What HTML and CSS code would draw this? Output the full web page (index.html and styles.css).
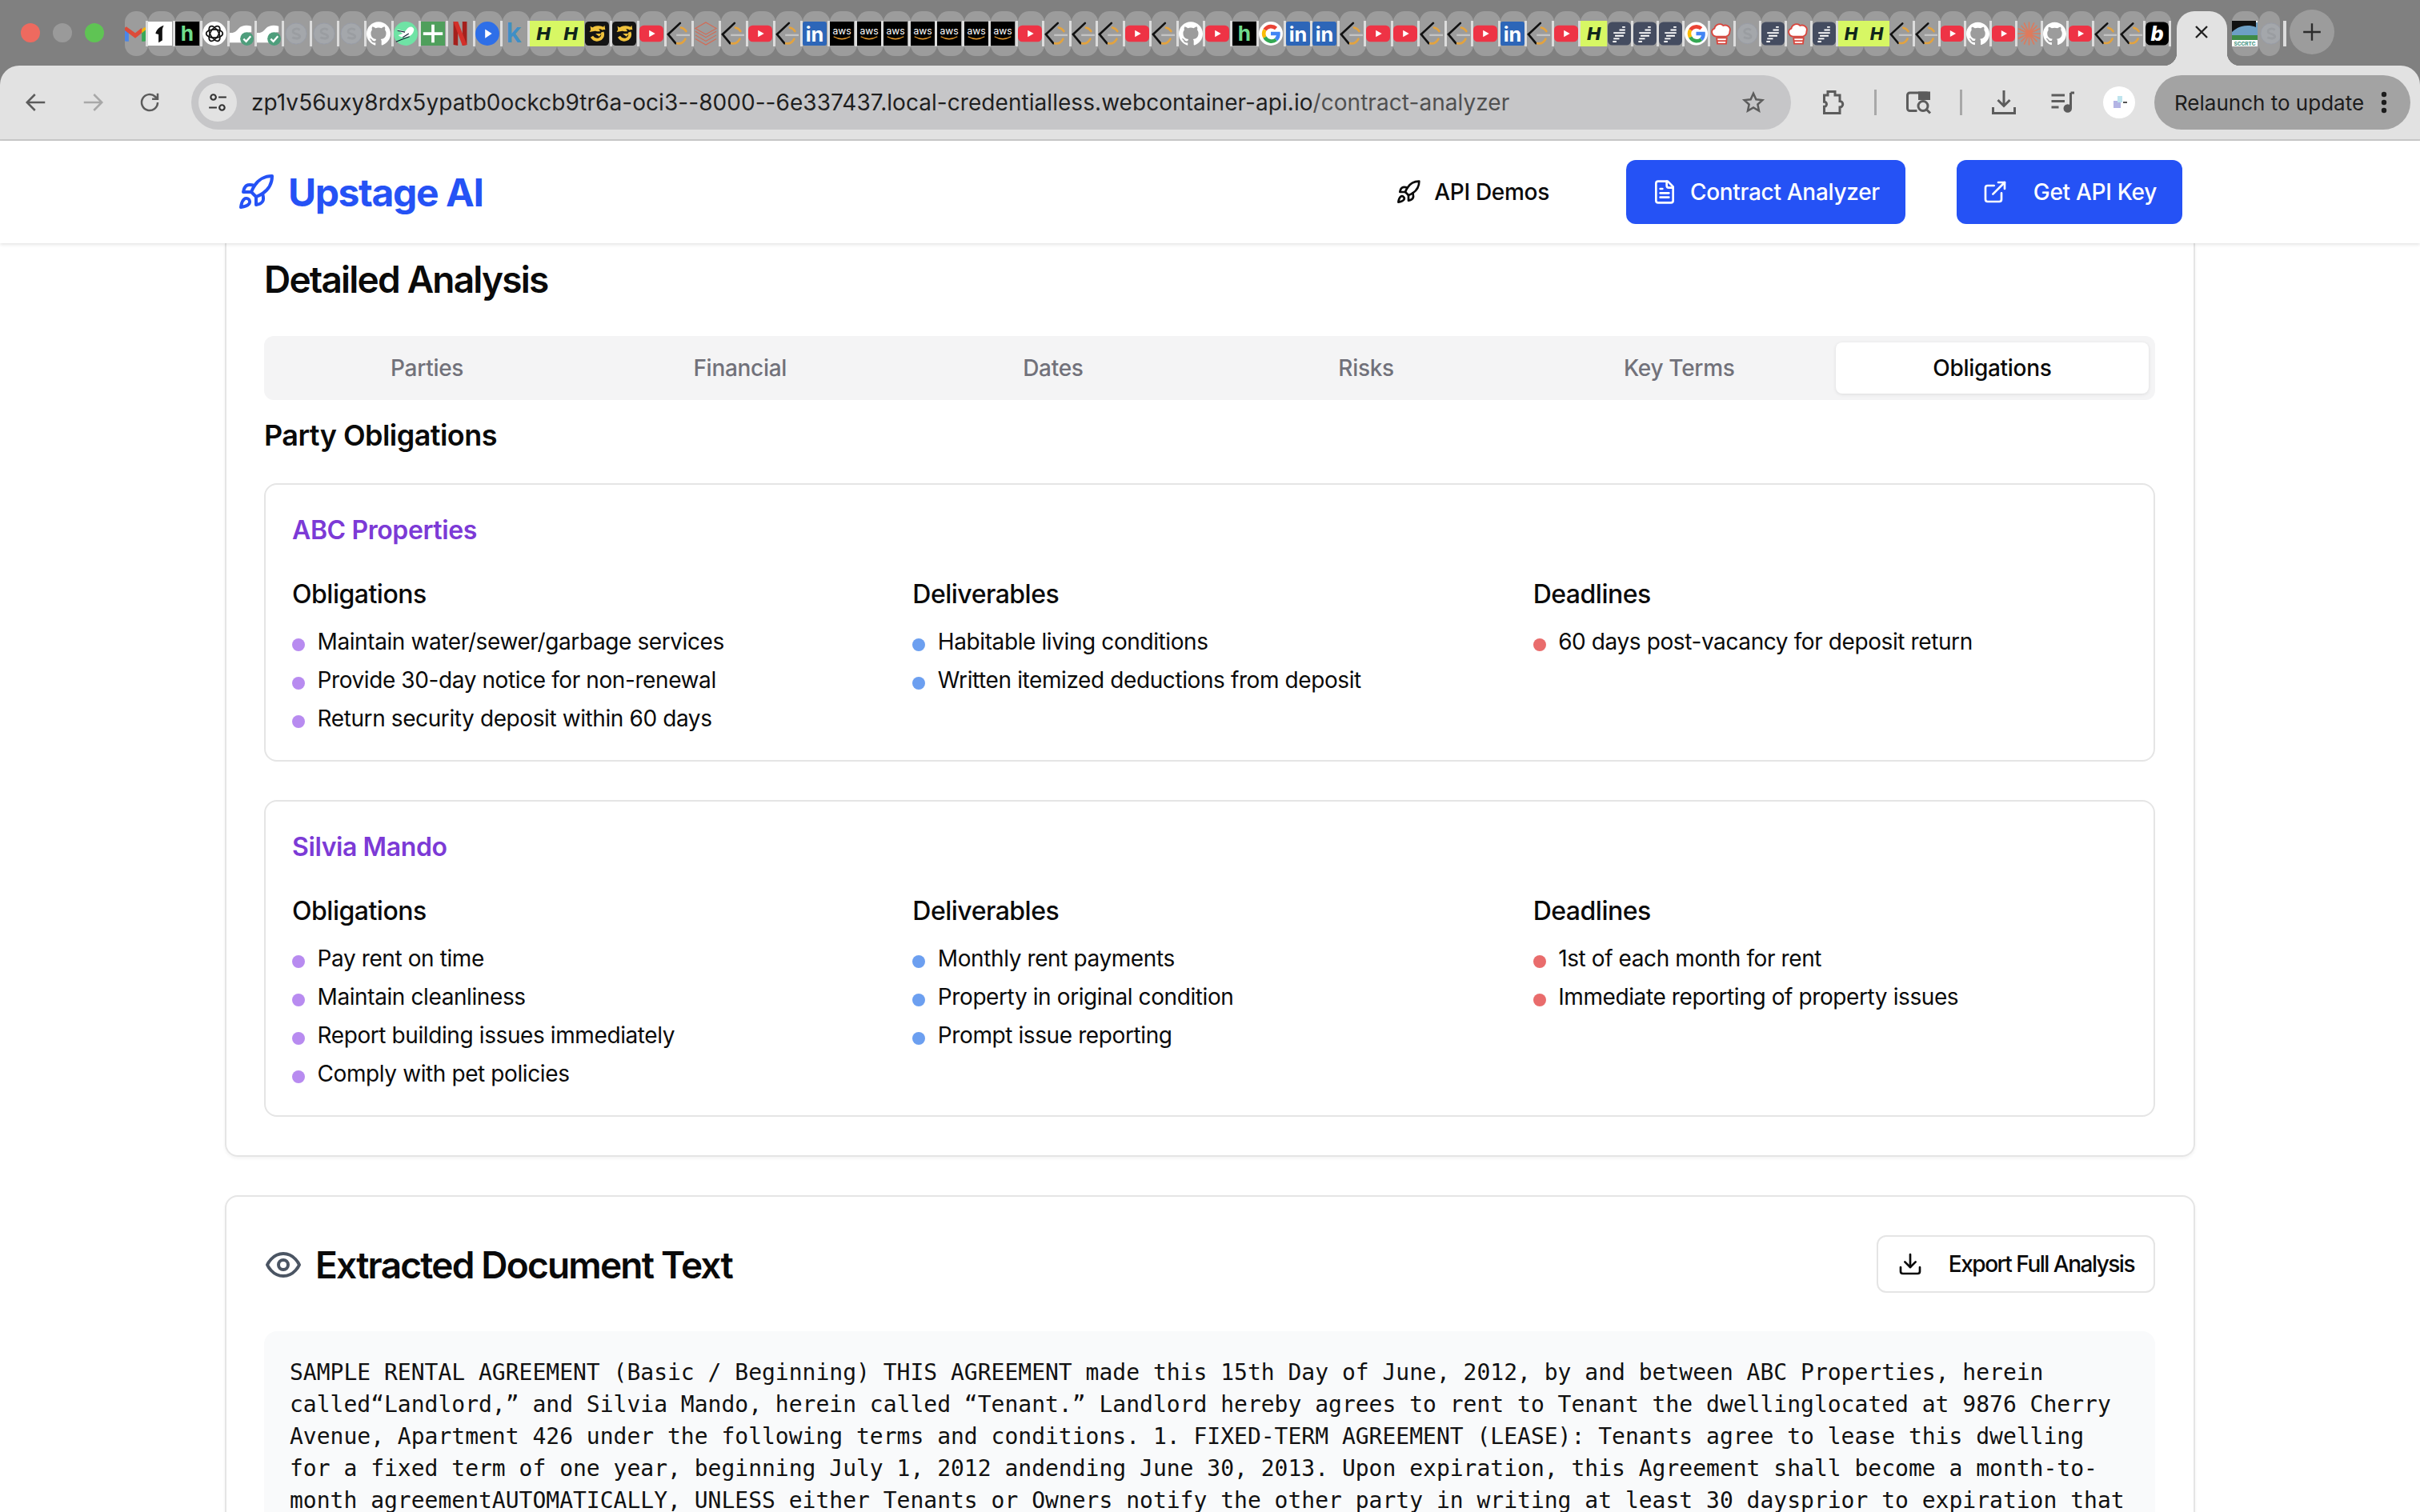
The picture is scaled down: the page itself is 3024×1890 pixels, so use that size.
FILE: index.html
```html
<!DOCTYPE html>
<html lang="en">
<head>
    <meta charset="UTF-8">
    <meta name="viewport" content="width=device-width, initial-scale=1.0">
    <title>Upstage AI - Contract Analyzer</title>
    <link rel="stylesheet" href="styles.css">
</head>
<body>
    <svg class="sprites" aria-hidden="true">
        <symbol id="gmail" viewBox="0 0 32 32">
            <path fill="#4a86e8" d="M0 10h6v18H2a2 2 0 0 1-2-2z"/>
            <path fill="#3aa757" d="M26 15l6-5v16a2 2 0 0 1-2 2h-4z"/>
            <path fill="#f4b400" d="M26 10l3-3c1-.8 3-.5 3 1v2l-6 5z"/>
            <path fill="#dd4b39" d="M0 8c0-2 2-3 3.500-2L16 15 26 7v8l-10 8L0 11z"/>
        </symbol>
        <symbol id="fig" viewBox="0 0 32 32">
            <rect width="32" height="32" fill="#fff"/>
            <path fill="#111" d="M21 5c-6 2-10 6-11 11l4 1v11l5-3V12c0-3 1-5 2-7z"/>
        </symbol>
        <symbol id="hh" viewBox="0 0 32 32">
            <rect width="32" height="32" fill="#000"/>
            <text class="fav-text" x="16" y="26" font-size="28" font-weight="700" fill="#6fdc8c" text-anchor="middle">h</text>
        </symbol>
        <symbol id="openai" viewBox="0 0 32 32">
            <circle cx="16" cy="16" r="16" fill="#fff"/>
            <g fill="none" stroke="#111" stroke-width="1.800">
                <ellipse cx="16" cy="16" rx="11" ry="5.500"/>
                <ellipse cx="16" cy="16" rx="11" ry="5.500" transform="rotate(60 16 16)"/>
                <ellipse cx="16" cy="16" rx="11" ry="5.500" transform="rotate(120 16 16)"/>
            </g>
        </symbol>
        <symbol id="check" viewBox="0 0 32 32">
            <path fill="#fff" d="M0 15c6 0 8-1 12-6 4-4 10-5 17-3v8c-5 0-6 2-9 6-2 3-3 8-3 8H0z"/>
            <circle cx="23" cy="23" r="9" fill="#4e9e7c"/>
            <path fill="none" stroke="#fff" stroke-width="2.500" d="M18.500 23l3.500 3.500 6-7"/>
        </symbol>
        <symbol id="blank" viewBox="0 0 32 32">
            <circle cx="16" cy="16" r="14" fill="#a4a7ab" stroke="#989ca6"/>
            <path fill="none" stroke="#9a9da1" stroke-width="3" d="M21 11c-4-3-10-1-9 3 1 3 9 2 9 6 0 3-6 3-10 1"/>
        </symbol>
        <symbol id="github" viewBox="0 0 24 24">
            <path fill="#fff" d="M12 .297c-6.630 0-12 5.373-12 12 0 5.303 3.438 9.800 8.205 11.385.6.113.82-.258.82-.577 0-.285-.01-1.040-.015-2.040-3.338.724-4.042-1.610-4.042-1.610C4.422 18.070 3.633 17.700 3.633 17.700c-1.087-.744.084-.729.084-.729 1.205.084 1.838 1.236 1.838 1.236 1.070 1.835 2.809 1.305 3.495.998.108-.776.417-1.305.76-1.605-2.665-.3-5.466-1.332-5.466-5.930 0-1.310.465-2.380 1.235-3.220-.135-.303-.54-1.523.105-3.176 0 0 1.005-.322 3.300 1.230.96-.267 1.980-.399 3-.405 1.020.006 2.040.138 3 .405 2.280-1.552 3.285-1.230 3.285-1.230.645 1.653.24 2.873.12 3.176.765.84 1.230 1.910 1.230 3.220 0 4.610-2.805 5.625-5.475 5.920.42.36.81 1.096.81 2.220 0 1.606-.015 2.896-.015 3.286 0 .315.21.69.825.57C20.565 22.092 24 17.592 24 12.297c0-6.627-5.373-12-12-12"/>
        </symbol>
        <symbol id="bird" viewBox="0 0 32 32">
            <circle cx="16" cy="16" r="16" fill="#6fe3a5"/>
            <path fill="#fff" d="M4 10l11 3c3-3 4-6 8-6 2 0 4 2 4 4-1 6-6 10-12 10-4 0-7-1-9-3l6-2z"/>
            <path fill="none" stroke="#123" stroke-width="1.200" d="M3 27l10-4 8-3M5 12l10 2M12 21l8-5"/>
        </symbol>
        <symbol id="plus" viewBox="0 0 32 32">
            <rect width="32" height="32" fill="#4f9f5c"/>
            <path fill="#fff" d="M14 4h4v10h11v4H18v10h-4V18H3v-4h11z"/>
        </symbol>
        <symbol id="netflix" viewBox="0 0 32 32">
            <path fill="#a5201c" d="M7 0h6v32l-6-1zM19 0h6v31l-6 1z"/>
            <path fill="#d3302a" d="M7 0h6l12 31-6 1z"/>
        </symbol>
        <symbol id="bplay" viewBox="0 0 32 32">
            <circle cx="16" cy="16" r="16" fill="#2e6fe8"/>
            <path fill="#fff" d="M13 10l9 6-9 6z"/>
        </symbol>
        <symbol id="kay" viewBox="0 0 32 32">
            <text class="fav-text" x="15" y="28" font-size="36" font-weight="600" fill="#3f8fc6" text-anchor="middle">k</text>
        </symbol>
        <symbol id="lime" viewBox="0 0 32 32" preserveAspectRatio="none">
            <rect width="32" height="32" fill="#d7f764"/>
            <text class="fav-text" x="16" y="24" font-size="22" font-weight="800" font-style="italic" fill="#10261b" text-anchor="middle">H</text>
        </symbol>
        <symbol id="cat" viewBox="0 0 32 32">
            <rect width="32" height="32" rx="5" fill="#141414"/>
            <path fill="none" stroke="#f0c23c" stroke-width="4" d="M25 10c-3-3-12-4-15 1 5-1 8 0 8 2M23 14c2 5-1 9-5 10-4 1-7-1-9-4"/>
            <path fill="#f0c23c" d="M7 6l5 3-4 4zM26 5l1 6-5-1zM14 16h8l-3 4z"/>
        </symbol>
        <symbol id="yt" viewBox="0 0 32 32">
            <rect y="5" width="32" height="22" rx="6" fill="#ee3345"/>
            <path fill="#fff" d="M13 11.500l8 4.500-8 4.500z"/>
        </symbol>
        <symbol id="chev" viewBox="0 0 32 32">
            <path fill="none" stroke="#111" stroke-width="2.800" stroke-linecap="round" d="M18 2L2 17l10 12"/>
            <path fill="none" stroke="#e3a33f" stroke-width="2.800" stroke-linecap="round" d="M19 8c4 1 6 3 7 5M25 23c-2 4-6 7-11 6"/>
            <path stroke="#c4c4c4" stroke-width="2.500" d="M13 18h18"/>
        </symbol>
        <symbol id="layers" viewBox="0 0 32 32">
            <g fill="none" stroke="#d46a54" stroke-width="1.200">
                <path d="M16 1L30 9 16 17 2 9z"/>
                <path d="M2 13l14 8 14-8M2 18l14 8 14-8M2 23l14 8 14-8"/>
            </g>
        </symbol>
        <symbol id="linked" viewBox="0 0 32 32">
            <rect width="32" height="32" rx="3" fill="#2d66b8"/>
            <text class="fav-text" x="16" y="27" font-size="27" font-weight="700" fill="#fff" text-anchor="middle">in</text>
        </symbol>
        <symbol id="aws" viewBox="0 0 32 32">
            <rect width="32" height="32" fill="#000"/>
            <text class="fav-text" x="16" y="17" font-size="13" fill="#fff" text-anchor="middle">aws</text>
            <path fill="none" stroke="#e79a2c" stroke-width="1.500" d="M5 20c7 4 15 4 22 0"/>
        </symbol>
        <symbol id="goog" viewBox="0 0 32 32">
            <circle cx="16" cy="16" r="16" fill="#fff"/>
            <g fill="none" stroke-width="5">
                <path stroke="#ea4335" d="M23 9a10 10 0 0 0-15 2"/>
                <path stroke="#fbbc05" d="M8 11a10 10 0 0 0 0 10"/>
                <path stroke="#34a853" d="M8 21a10 10 0 0 0 15 3"/>
                <path stroke="#4285f4" d="M23 24a10 10 0 0 0 3-8H16"/>
            </g>
        </symbol>
        <symbol id="doc" viewBox="0 0 32 32">
            <rect width="32" height="32" rx="6" fill="#444c60"/>
            <path stroke="#fff" stroke-width="2" d="M20 7h4M16 11h8M8 15h16M10 19h12M8 23h8M7 27h5"/>
        </symbol>
        <symbol id="chef" viewBox="0 0 32 32">
            <path fill="#fff" stroke="#d9453c" stroke-width="2" d="M8 20c-6-1-8-9-2-11 1-6 9-8 12-4 5-2 11 2 9 8 0 3-2 6-5 7z"/>
            <path fill="#fff" stroke="#d9453c" stroke-width="2" d="M9 22h14l-1 8H10z M9 26h14"/>
        </symbol>
        <symbol id="sun" viewBox="0 0 32 32">
            <g stroke="#de7a5c" stroke-width="1.800">
                <path d="M16 0v32M0 16h32M5 5l22 22M27 5L5 27M9 1l14 30M23 1L9 31M1 9l30 14M31 9L1 23"/>
            </g>
        </symbol>
        <symbol id="bee" viewBox="0 0 32 32">
            <rect width="32" height="32" rx="7" fill="#000"/>
            <text class="fav-text" x="16" y="26" font-size="28" font-weight="800" font-style="italic" fill="#fff" text-anchor="middle">b</text>
        </symbol>
        <symbol id="coast" viewBox="0 0 32 32">
            <rect width="32" height="32" fill="#fff"/>
            <rect y="2" width="32" height="20" fill="#6d9fc4"/>
            <path fill="#111" d="M0 0h30v8C20 4 8 6 0 14z"/>
            <rect y="18" width="32" height="6" fill="#3f8b46"/>
            <text class="fav-text" x="16" y="31" font-size="6.500" font-weight="700" fill="#3b8f7d" text-anchor="middle">SCCRTC</text>
        </symbol>
        <symbol id="i-rocket" viewBox="0 0 24 24">
            <path d="M4.500 16.500c-1.500 1.260-2 5-2 5s3.740-.5 5-2c.71-.84.7-2.130-.09-2.910a2.180 2.180 0 0 0-2.910-.09z"/>
            <path d="m12 15-3-3a22 22 0 0 1 2-3.950A12.880 12.880 0 0 1 22 2c0 2.720-.78 7.500-6 11a22.350 22.350 0 0 1-4 2z"/>
            <path d="M9 12H4s.55-3.030 2-4c1.620-1.080 5 0 5 0"/>
            <path d="M12 15v5s3.030-.55 4-2c1.080-1.620 0-5 0-5"/>
        </symbol>
    </svg>

    <header class="browser">
        <div class="tabstrip">
            <div class="lights">
                <span class="light light-red"></span>
                <span class="light light-grey"></span>
                <span class="light light-green"></span>
            </div>
            <div class="tabs-pinned tabs-wide">
                <span class="tab tab-first"><svg class="fav"><use href="#gmail"/></svg></span>
                <span class="tab"><svg class="fav"><use href="#fig"/></svg></span>
                <span class="tab"><svg class="fav"><use href="#hh"/></svg></span>
                <span class="tab"><svg class="fav"><use href="#openai"/></svg></span>
                <span class="tab"><svg class="fav"><use href="#check"/></svg></span>
                <span class="tab"><svg class="fav"><use href="#check"/></svg></span>
                <span class="tab"><svg class="fav"><use href="#blank"/></svg></span>
                <span class="tab"><svg class="fav"><use href="#blank"/></svg></span>
                <span class="tab"><svg class="fav"><use href="#blank"/></svg></span>
                <span class="tab"><svg class="fav"><use href="#github"/></svg></span>
                <span class="tab"><svg class="fav"><use href="#bird"/></svg></span>
                <span class="tab"><svg class="fav"><use href="#plus"/></svg></span>
                <span class="tab"><svg class="fav"><use href="#netflix"/></svg></span>
                <span class="tab"><svg class="fav"><use href="#bplay"/></svg></span>
                <span class="tab"><svg class="fav"><use href="#kay"/></svg></span>
                <span class="tab tab-flush"><svg class="fav"><use href="#lime"/></svg></span>
                <span class="tab tab-flush"><svg class="fav"><use href="#lime"/></svg></span>
                <span class="tab"><svg class="fav"><use href="#cat"/></svg></span>
                <span class="tab"><svg class="fav"><use href="#cat"/></svg></span>
                <span class="tab"><svg class="fav"><use href="#yt"/></svg></span>
                <span class="tab"><svg class="fav"><use href="#chev"/></svg></span>
                <span class="tab"><svg class="fav"><use href="#layers"/></svg></span>
                <span class="tab"><svg class="fav"><use href="#chev"/></svg></span>
                <span class="tab"><svg class="fav"><use href="#yt"/></svg></span>
                <span class="tab"><svg class="fav"><use href="#chev"/></svg></span>
                <span class="tab"><svg class="fav"><use href="#linked"/></svg></span>
            </div>
            <div class="tabs-pinned tabs-mid">
                <span class="tab"><svg class="fav"><use href="#aws"/></svg></span>
                <span class="tab"><svg class="fav"><use href="#aws"/></svg></span>
                <span class="tab"><svg class="fav"><use href="#aws"/></svg></span>
                <span class="tab"><svg class="fav"><use href="#aws"/></svg></span>
                <span class="tab"><svg class="fav"><use href="#aws"/></svg></span>
                <span class="tab"><svg class="fav"><use href="#aws"/></svg></span>
                <span class="tab"><svg class="fav"><use href="#aws"/></svg></span>
                <span class="tab"><svg class="fav"><use href="#yt"/></svg></span>
                <span class="tab"><svg class="fav"><use href="#chev"/></svg></span>
                <span class="tab"><svg class="fav"><use href="#chev"/></svg></span>
                <span class="tab"><svg class="fav"><use href="#chev"/></svg></span>
                <span class="tab"><svg class="fav"><use href="#yt"/></svg></span>
                <span class="tab"><svg class="fav"><use href="#chev"/></svg></span>
                <span class="tab"><svg class="fav"><use href="#github"/></svg></span>
                <span class="tab"><svg class="fav"><use href="#yt"/></svg></span>
                <span class="tab"><svg class="fav"><use href="#hh"/></svg></span>
                <span class="tab"><svg class="fav"><use href="#goog"/></svg></span>
                <span class="tab"><svg class="fav"><use href="#linked"/></svg></span>
                <span class="tab"><svg class="fav"><use href="#linked"/></svg></span>
                <span class="tab"><svg class="fav"><use href="#chev"/></svg></span>
                <span class="tab"><svg class="fav"><use href="#yt"/></svg></span>
                <span class="tab"><svg class="fav"><use href="#yt"/></svg></span>
                <span class="tab"><svg class="fav"><use href="#chev"/></svg></span>
                <span class="tab"><svg class="fav"><use href="#chev"/></svg></span>
                <span class="tab"><svg class="fav"><use href="#yt"/></svg></span>
                <span class="tab"><svg class="fav"><use href="#linked"/></svg></span>
                <span class="tab"><svg class="fav"><use href="#chev"/></svg></span>
                <span class="tab"><svg class="fav"><use href="#yt"/></svg></span>
                <span class="tab tab-flush"><svg class="fav"><use href="#lime"/></svg></span>
            </div>
            <div class="tabs-pinned tabs-narrow">
                <span class="tab"><svg class="fav"><use href="#doc"/></svg></span>
                <span class="tab"><svg class="fav"><use href="#doc"/></svg></span>
                <span class="tab"><svg class="fav"><use href="#doc"/></svg></span>
                <span class="tab"><svg class="fav"><use href="#goog"/></svg></span>
                <span class="tab"><svg class="fav"><use href="#chef"/></svg></span>
                <span class="tab"><svg class="fav"><use href="#blank"/></svg></span>
                <span class="tab"><svg class="fav"><use href="#doc"/></svg></span>
                <span class="tab"><svg class="fav"><use href="#chef"/></svg></span>
                <span class="tab"><svg class="fav"><use href="#doc"/></svg></span>
                <span class="tab tab-flush"><svg class="fav"><use href="#lime"/></svg></span>
                <span class="tab tab-flush"><svg class="fav"><use href="#lime"/></svg></span>
                <span class="tab"><svg class="fav"><use href="#chev"/></svg></span>
                <span class="tab"><svg class="fav"><use href="#chev"/></svg></span>
                <span class="tab"><svg class="fav"><use href="#yt"/></svg></span>
                <span class="tab"><svg class="fav"><use href="#github"/></svg></span>
                <span class="tab"><svg class="fav"><use href="#yt"/></svg></span>
                <span class="tab"><svg class="fav"><use href="#sun"/></svg></span>
                <span class="tab"><svg class="fav"><use href="#github"/></svg></span>
                <span class="tab"><svg class="fav"><use href="#yt"/></svg></span>
                <span class="tab"><svg class="fav"><use href="#chev"/></svg></span>
                <span class="tab"><svg class="fav"><use href="#chev"/></svg></span>
                <span class="tab"><svg class="fav"><use href="#bee"/></svg></span>
            </div>
            <div class="tab-active">
                <svg class="tab-close" viewBox="0 0 20 20"><path d="M3 3l14 14M17 3L3 17"/></svg>
            </div>
            <span class="tab tab-after"><svg class="fav"><use href="#coast"/></svg></span>
            <span class="tab tab-last"><svg class="fav"><use href="#blank"/></svg></span>
            <span class="tab-sep"></span>
            <span class="tab-new">
                <svg viewBox="0 0 24 24"><path d="M12 2v20M2 12h20"/></svg>
            </span>
        </div>

        <div class="toolbar">
            <svg class="tool" viewBox="0 0 24 24"><path d="M21 12H3M11 4l-8 8 8 8"/></svg>
            <svg class="tool tool-off" viewBox="0 0 24 24"><path d="M3 12h18M13 4l8 8-8 8"/></svg>
            <svg class="tool tool-reload" viewBox="0 0 24 24"><path d="M20 12a8 8 0 1 1-2.500-5.800L20 8.500M20 3v5.500h-5.500"/></svg>
            <div class="omnibox">
                <span class="site-info">
                    <svg viewBox="0 0 24 24"><circle cx="7" cy="6" r="3"/><path d="M13 6h9M2 18h9"/><circle cx="17" cy="18" r="3"/></svg>
                </span>
                <span class="url">zp1v56uxy8rdx5ypatb0ockcb9tr6a-oci3--8000--6e337437.local-credentialless.webcontainer-api.io<span class="url-path">/contract-analyzer</span></span>
                <svg class="tool star" viewBox="0 0 24 24"><path d="M12 3l2.700 6 6.300.7-4.700 4.300 1.300 6.500-5.600-3.300-5.600 3.300L7.700 14 3 9.700 9.300 9z"/></svg>
            </div>
            <div class="toolbar-actions">
                <svg class="tool" viewBox="0 0 24 24"><path d="M8 3h6v3h4v5a2.500 2.500 0 0 1 0 5v5H5v-5.500a2 2 0 0 0 0-4V6h3z"/></svg>
                <span class="tool-sep"></span>
                <svg class="tool" viewBox="0 0 24 24"><path d="M11 19H5a2 2 0 0 1-2-2V6a2 2 0 0 1 2-2h14a2 2 0 0 1 2 2v3"/><path class="solid" d="M13 4h8v5h-8z"/><circle cx="16" cy="15" r="4"/><path d="M19 18l3 3"/></svg>
                <span class="tool-sep"></span>
                <svg class="tool tool-download" viewBox="0 0 24 24"><path d="M12 2v13M7 10l5 5 5-5M3 16v5h18v-5"/></svg>
                <svg class="tool" viewBox="0 0 24 24"><path d="M3 6h11M3 11h11M3 16h6M19 4v13"/><circle class="solid" cx="16.500" cy="17" r="2.500"/><path d="M19 4h3"/></svg>
                <span class="avatar">
                    <svg viewBox="0 0 40 40"><rect x="13" y="18" width="9" height="9" fill="#b3b4e4"/><rect x="18" y="12" width="6" height="8" fill="#bfe4ee"/><rect x="25" y="19" width="5" height="2" fill="#555"/></svg>
                </span>
                <div class="relaunch">
                    <span>Relaunch to update</span>
                    <svg viewBox="0 0 8 32"><circle cx="4" cy="6" r="3.200"/><circle cx="4" cy="16" r="3.200"/><circle cx="4" cy="26" r="3.200"/></svg>
                </div>
            </div>
        </div>
    </header>

    <nav class="topnav">
        <a class="logo" href="#">
            <svg class="icon logo-icon" viewBox="0 0 24 24"><use href="#i-rocket"/></svg>
            <span>Upstage AI</span>
        </a>
        <div class="nav-links">
            <a class="nav-btn" href="#">
                <svg class="icon" viewBox="0 0 24 24"><use href="#i-rocket"/></svg>
                API Demos
            </a>
            <a class="nav-btn nav-btn-primary" href="#">
                <svg class="icon" viewBox="0 0 24 24"><path d="M15 2H6a2 2 0 0 0-2 2v16a2 2 0 0 0 2 2h12a2 2 0 0 0 2-2V7Z"/><path d="M14 2v4a2 2 0 0 0 2 2h4"/><path d="M10 9H8"/><path d="M16 13H8"/><path d="M16 17H8"/></svg>
                Contract Analyzer
            </a>
            <a class="nav-btn nav-btn-primary nav-btn-wide" href="#">
                <svg class="icon" viewBox="0 0 24 24"><path d="M15 3h6v6"/><path d="M10 14 21 3"/><path d="M18 13v6a2 2 0 0 1-2 2H5a2 2 0 0 1-2-2V8a2 2 0 0 1 2-2h6"/></svg>
                Get API Key
            </a>
        </div>
    </nav>

    <main class="content">
        <section class="card card-cut">
            <h2 class="card-title">Detailed Analysis</h2>
            <div class="seg-tabs">
                <button class="seg-tab">Parties</button>
                <button class="seg-tab">Financial</button>
                <button class="seg-tab">Dates</button>
                <button class="seg-tab">Risks</button>
                <button class="seg-tab">Key Terms</button>
                <button class="seg-tab active">Obligations</button>
            </div>
            <h3 class="section-title">Party Obligations</h3>

            <div class="party">
                <h4 class="party-name">ABC Properties</h4>
                <div class="party-grid">
                    <div>
                        <h5 class="party-head">Obligations</h5>
                        <ul class="party-list purple">
                            <li>Maintain water/sewer/garbage services</li>
                            <li>Provide 30-day notice for non-renewal</li>
                            <li>Return security deposit within 60 days</li>
                        </ul>
                    </div>
                    <div>
                        <h5 class="party-head">Deliverables</h5>
                        <ul class="party-list blue">
                            <li>Habitable living conditions</li>
                            <li>Written itemized deductions from deposit</li>
                        </ul>
                    </div>
                    <div>
                        <h5 class="party-head">Deadlines</h5>
                        <ul class="party-list red">
                            <li>60 days post-vacancy for deposit return</li>
                        </ul>
                    </div>
                </div>
            </div>

            <div class="party">
                <h4 class="party-name">Silvia Mando</h4>
                <div class="party-grid">
                    <div>
                        <h5 class="party-head">Obligations</h5>
                        <ul class="party-list purple">
                            <li>Pay rent on time</li>
                            <li>Maintain cleanliness</li>
                            <li>Report building issues immediately</li>
                            <li>Comply with pet policies</li>
                        </ul>
                    </div>
                    <div>
                        <h5 class="party-head">Deliverables</h5>
                        <ul class="party-list blue">
                            <li>Monthly rent payments</li>
                            <li>Property in original condition</li>
                            <li>Prompt issue reporting</li>
                        </ul>
                    </div>
                    <div>
                        <h5 class="party-head">Deadlines</h5>
                        <ul class="party-list red">
                            <li>1st of each month for rent</li>
                            <li>Immediate reporting of property issues</li>
                        </ul>
                    </div>
                </div>
            </div>
        </section>

        <section class="card card-doc">
            <div class="doc-head">
                <h2 class="doc-title">
                    <svg class="icon eye" viewBox="0 0 24 24"><path d="M2 12s3-7 10-7 10 7 10 7-3 7-10 7-10-7-10-7Z"/><circle cx="12" cy="12" r="3"/></svg>
                    Extracted Document Text
                </h2>
                <button class="export-btn">
                    <svg class="icon" viewBox="0 0 24 24"><path d="M21 15v4a2 2 0 0 1-2 2H5a2 2 0 0 1-2-2v-4"/><polyline points="7 10 12 15 17 10"/><line x1="12" x2="12" y1="15" y2="3"/></svg>
                    Export Full Analysis
                </button>
            </div>
            <pre class="doc-text">SAMPLE RENTAL AGREEMENT (Basic / Beginning) THIS AGREEMENT made this 15th Day of June, 2012, by and between ABC Properties, herein called“Landlord,” and Silvia Mando, herein called “Tenant.” Landlord hereby agrees to rent to Tenant the dwellinglocated at 9876 Cherry Avenue, Apartment 426 under the following terms and conditions. 1. FIXED-TERM AGREEMENT (LEASE): Tenants agree to lease this dwelling for a fixed term of one year, beginning July 1, 2012 andending June 30, 2013. Upon expiration, this Agreement shall become a month-to-month agreementAUTOMATICALLY, UNLESS either Tenants or Owners notify the other party in writing at least 30 daysprior to expiration that they do not wish this Agreement to continue.</pre>
        </section>
    </main>
</body>
</html>
```

FILE: styles.css
```css
* {
    box-sizing: border-box;
}

html, body {
    margin: 0;
    height: 1890px;
    overflow: hidden;
}

body {
    width: 3024px;
    font-family: Inter, "Liberation Sans", sans-serif;
    color: #0a0a0a;
    background-color: #fff;
    display: flex;
    flex-direction: column;
}

a {
    color: inherit;
    text-decoration: none;
}

.sprites {
    display: none;
}

.fav-text {
    font-family: Inter, sans-serif;
}

/* browser chrome */
.browser {
    background-color: #808080;
    flex-shrink: 0;
}

.tabstrip {
    height: 82px;
    display: flex;
    align-items: flex-start;
    padding-top: 14px;
}

.lights {
    width: 156px;
    height: 54px;
    display: flex;
    align-items: center;
    gap: 16px;
    padding-left: 26px;
    flex-shrink: 0;
}

.light {
    width: 24px;
    height: 24px;
    border-radius: 50%;
}

.light-red { background-color: #ee6a5f; }
.light-grey { background-color: #9a9a9a; }
.light-green { background-color: #5fc454; }

.tabs-pinned {
    display: flex;
    flex-shrink: 0;
}

.tab {
    height: 56px;
    background-color: #9c9c9c;
    border-radius: 14px;
    display: flex;
    align-items: center;
    flex-shrink: 0;
}

.tab::after {
    content: "";
    width: 3px;
    height: 32px;
    margin-left: auto;
    background-color: #dcdcdc;
    flex-shrink: 0;
}

.tabs-wide .tab {
    width: 34.1px;
}

.tabs-wide .tab-first {
    width: 29px;
}

.tabs-mid .tab {
    width: 33.5px;
}

.tabs-narrow .tab {
    width: 32px;
}

.tab-first .fav {
    width: 26px;
}

.tabs-narrow .fav {
    width: 29px;
}

.tab-flush::after {
    display: none;
}

.fav {
    width: 30px;
    height: 32px;
    flex-shrink: 0;
}

.tabs-pinned .tab-flush .fav {
    width: 100%;
}

.tab-active {
    width: 63px;
    height: 68px;
    margin-left: 7px;
    padding-top: 10px;
    background-color: #e2e2e2;
    border-radius: 22px 22px 0 0;
    position: relative;
    display: flex;
    justify-content: center;
    flex-shrink: 0;
}

.tab-active::before,
.tab-active::after {
    content: "";
    position: absolute;
    bottom: 0;
    width: 16px;
    height: 16px;
}

.tab-active::before {
    left: -16px;
    background: radial-gradient(circle at 0 0, transparent 16px, #e2e2e2 16.5px);
}

.tab-active::after {
    right: -16px;
    background: radial-gradient(circle at 100% 0, transparent 16px, #e2e2e2 16.5px);
}

.tab-close {
    width: 20px;
    height: 20px;
    margin-top: 6px;
    fill: none;
    stroke: #222;
    stroke-width: 2.4;
}

.tab-after {
    width: 33.7px;
    margin-left: 6px;
}

.tab-after .fav {
    width: 32px;
}

.tab-after::after {
    display: none;
}

.tab-last {
    width: 26px;
    overflow: hidden;
}

.tab-last::after {
    display: none;
}

.tab-sep {
    width: 4px;
    height: 32px;
    margin: 12px 4px 0;
    background-color: #dcdcdc;
}

.tab-new {
    width: 56px;
    height: 56px;
    margin-top: -2px;
    border-radius: 50%;
    background-color: #9c9c9c;
    display: flex;
    align-items: center;
    justify-content: center;
}

.tab-new svg {
    width: 26px;
    height: 26px;
    fill: none;
    stroke: #2b2b2b;
    stroke-width: 2.2;
}

.toolbar {
    height: 94px;
    padding: 12px 12px 12px 30px;
    background-color: #e2e2e2;
    border-radius: 24px 24px 0 0;
    border-bottom: 2px solid #c8c8c8;
    display: flex;
    align-items: center;
}

.tool {
    width: 30px;
    height: 30px;
    fill: none;
    stroke: #5c5c5c;
    stroke-width: 2;
    margin-right: 41px;
    flex-shrink: 0;
}

.tool-off {
    stroke: #a8a8a8;
}

.tool-reload {
    margin-right: 37px;
}

.solid {
    fill: #5c5c5c;
}

.omnibox {
    width: 1999px;
    height: 68px;
    margin-right: 34px;
    padding: 0 32px 0 9px;
    border-radius: 34px;
    background-color: #c6c6c8;
    display: flex;
    align-items: center;
    flex-shrink: 0;
}

.omnibox .star {
    margin: 0 0 0 auto;
}

.site-info {
    width: 48px;
    height: 48px;
    border-radius: 50%;
    background-color: #e2e2e2;
    display: flex;
    align-items: center;
    justify-content: center;
    flex-shrink: 0;
}

.site-info svg {
    width: 26px;
    height: 26px;
    fill: none;
    stroke: #333;
    stroke-width: 2;
}

.url {
    margin-left: 18px;
    font-size: 28px;
    letter-spacing: 0.05px;
    color: #1f1f1f;
    white-space: nowrap;
}

.url-path {
    color: #505050;
}

.toolbar-actions {
    display: flex;
    align-items: center;
    flex: 1;
}

.toolbar-actions .tool {
    width: 36px;
    height: 36px;
    margin-right: 0;
}

.tool-sep {
    width: 3px;
    height: 32px;
    margin: 0 34px;
    background-color: #a8a8a8;
}

.toolbar-actions .tool-download {
    margin-right: 37px;
}

.avatar {
    width: 40px;
    height: 40px;
    margin: 0 24px 0 33px;
    border-radius: 50%;
    background-color: #fff;
    flex-shrink: 0;
}

.avatar svg {
    display: block;
}

.relaunch {
    flex: 1;
    height: 68px;
    padding: 0 29px 0 25px;
    border-radius: 34px;
    background-color: #a3a3a3;
    display: flex;
    align-items: center;
    justify-content: space-between;
    font-size: 26px;
    color: #1c1c1c;
    white-space: nowrap;
}

.relaunch svg {
    width: 8px;
    height: 32px;
    fill: #1c1c1c;
}

/* site nav */
.topnav {
    height: 128px;
    padding: 0 297px 0 296px;
    background-color: #fff;
    box-shadow: 0 2px 4px rgba(0, 0, 0, 0.1);
    display: flex;
    align-items: center;
    justify-content: space-between;
    position: relative;
    z-index: 1;
    flex-shrink: 0;
}

.icon {
    width: 32px;
    height: 32px;
    fill: none;
    stroke: currentColor;
    stroke-width: 2;
    stroke-linecap: round;
    stroke-linejoin: round;
    flex-shrink: 0;
}

.logo {
    display: flex;
    align-items: center;
    gap: 16px;
    font-size: 48px;
    font-weight: 700;
    letter-spacing: -1.4px;
    color: #2552f5;
}

.logo-icon {
    width: 48px;
    height: 48px;
}

.nav-links {
    display: flex;
    align-items: center;
    gap: 64px;
}

.nav-btn {
    height: 80px;
    padding: 0 32px;
    border-radius: 12px;
    display: flex;
    align-items: center;
    gap: 16px;
    font-size: 28px;
    font-weight: 500;
    letter-spacing: -0.3px;
}

.nav-btn-primary {
    background-color: #2552f5;
    color: #fff;
}

.nav-btn-wide {
    gap: 32px;
}

/* cards */
.content {
    padding: 0 281px;
}

.card {
    border: 2px solid #e5e5e5;
    border-radius: 16px;
    box-shadow: 0 2px 4px rgba(0, 0, 0, 0.05);
    padding: 48px 48px 48px 47px;
}

.card-cut {
    border-top: none;
    border-radius: 0 0 16px 16px;
    padding-top: 13px;
}

.card-doc {
    margin-top: 48px;
}

.card-title {
    margin: 0;
    font-size: 46px;
    line-height: 64px;
    font-weight: 600;
    letter-spacing: -1.8px;
}

.seg-tabs {
    height: 80px;
    margin-top: 39px;
    padding: 8px;
    background-color: #f4f4f5;
    border-radius: 12px;
    display: grid;
    grid-template-columns: repeat(6, 1fr);
}

.seg-tab {
    border: none;
    background: none;
    border-radius: 8px;
    font-family: inherit;
    font-size: 28px;
    font-weight: 500;
    letter-spacing: -0.3px;
    color: #71717a;
}

.seg-tab.active {
    background-color: #fff;
    color: #0a0a0a;
    box-shadow: 0 1px 4px rgba(0, 0, 0, 0.1);
}

.section-title {
    margin: 16px 0 32px;
    font-size: 36px;
    line-height: 56px;
    font-weight: 600;
    letter-spacing: -0.55px;
}

.party {
    padding: 33px 32px 32px 33px;
    border: 2px solid #e5e5e5;
    border-radius: 16px;
}

.party + .party {
    margin-top: 48px;
}

.party-name {
    margin: 0 0 32px;
    font-size: 32px;
    line-height: 48px;
    font-weight: 600;
    letter-spacing: -0.4px;
    color: #7c3ad6;
}

.party-grid {
    display: grid;
    grid-template-columns: repeat(3, 1fr);
    gap: 32px;
}

.party-head {
    margin: 0 0 15px;
    font-size: 32px;
    line-height: 48px;
    font-weight: 500;
    letter-spacing: -0.5px;
}

.party-list {
    list-style: none;
    margin: 0;
    padding: 0;
    display: flex;
    flex-direction: column;
    gap: 8px;
    font-size: 28px;
    line-height: 40px;
    letter-spacing: -0.4px;
}

.party-list li {
    display: flex;
    gap: 15.5px;
}

.party-list li::before {
    content: "";
    width: 16px;
    height: 16px;
    margin-top: 16px;
    border-radius: 50%;
    flex-shrink: 0;
}

.purple li::before { background-color: #b88bf0; }
.blue li::before { background-color: #6c9ff0; }
.red li::before { background-color: #e96c6c; }

.doc-head {
    display: flex;
    align-items: center;
    justify-content: space-between;
}

.doc-title {
    margin: 2px 0 0;
    display: flex;
    align-items: center;
    gap: 16px;
    font-size: 46px;
    line-height: 64px;
    font-weight: 600;
    letter-spacing: -1.8px;
}

.eye {
    width: 48px;
    height: 48px;
    color: #4b5563;
}

.export-btn {
    height: 72px;
    padding: 0 24px;
    border: 2px solid #e5e5e5;
    border-radius: 12px;
    background-color: #fff;
    display: flex;
    align-items: center;
    gap: 32px;
    font-family: inherit;
    font-size: 28px;
    font-weight: 500;
    letter-spacing: -1.5px;
    color: #0a0a0a;
}

.doc-text {
    margin: 48px 0 0;
    padding: 32px;
    background-color: #f9fafb;
    border-radius: 16px;
    font-family: "DejaVu Sans Mono", monospace;
    font-size: 28px;
    line-height: 40px;
    white-space: pre-wrap;
    color: #111;
}
```
